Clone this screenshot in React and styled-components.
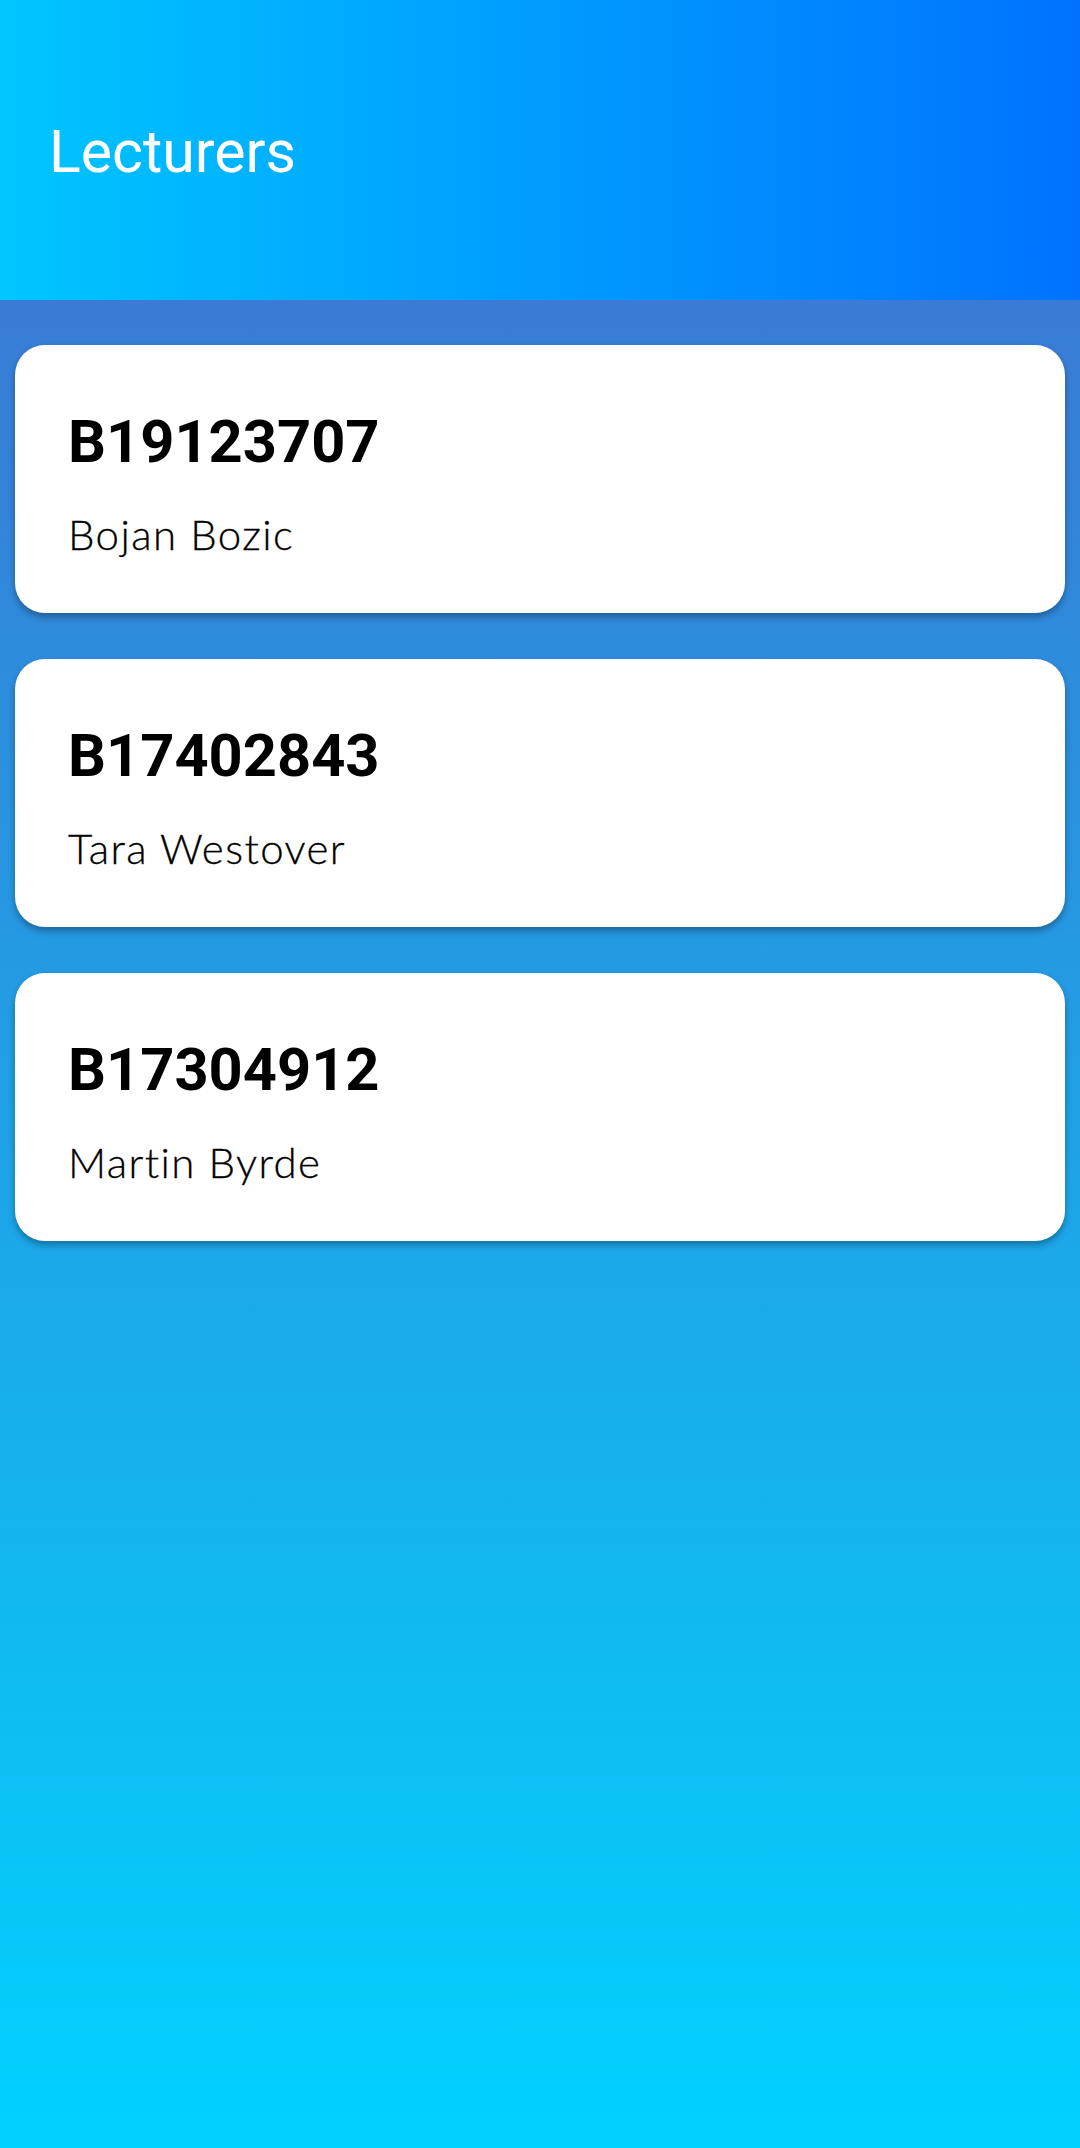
import React from "react";
import styled, { createGlobalStyle } from "styled-components";

const Global = createGlobalStyle`
  html, body { margin: 0; padding: 0; }
  body { font-family: Roboto, "Liberation Sans", sans-serif; }
  * { box-sizing: border-box; }
`;

const Page = styled.div`
  width: 1080px;
  min-height: 2148px;
  display: flex;
  flex-direction: column;
`;

const Header = styled.header`
  height: 300px;
  display: flex;
  align-items: center;
  padding-left: 49px;
  background: linear-gradient(to right, #00c6ff, #0072ff);
`;

const Title = styled.h1`
  margin: 0;
  font-family: Roboto, "Liberation Sans", sans-serif;
  font-weight: 400;
  font-size: 59px;
  color: #ffffff;
  line-height: 70px;
  transform: translateY(2px);
`;

const List = styled.main`
  flex: 1;
  display: flex;
  flex-direction: column;
  gap: 46px;
  padding: 45px 15px;
  background: linear-gradient(to bottom, #3a7bd5, #00d2ff);
`;

const Card = styled.section`
  background: #ffffff;
  border-radius: 30px;
  height: 268px;
  padding: 62px 53px 0 53px;
  box-shadow: 0 4px 7px rgba(0, 0, 0, 0.32);
  display: flex;
  flex-direction: column;
  gap: 32px;
`;

const Code = styled.div`
  font-family: Roboto, "Liberation Sans", sans-serif;
  font-weight: 700;
  font-size: 59.6px;
  line-height: 70px;
  color: #000000;
`;

const Name = styled.div`
  font-family: Lato, "Open Sans", sans-serif;
  font-weight: 300;
  font-size: 42px;
  line-height: 50px;
  letter-spacing: 1.4px;
  color: #000000;
  -webkit-text-stroke: 0.3px #000000;
`;

const lecturers = [
  { code: "B19123707", name: "Bojan Bozic" },
  { code: "B17402843", name: "Tara Westover" },
  { code: "B17304912", name: "Martin Byrde" },
];

export default function App() {
  return (
    <>
      <Global />
      <Page>
        <Header>
          <Title>Lecturers</Title>
        </Header>
        <List>
          {lecturers.map((l) => (
            <Card key={l.code}>
              <Code>{l.code}</Code>
              <Name>{l.name}</Name>
            </Card>
          ))}
        </List>
      </Page>
    </>
  );
}
